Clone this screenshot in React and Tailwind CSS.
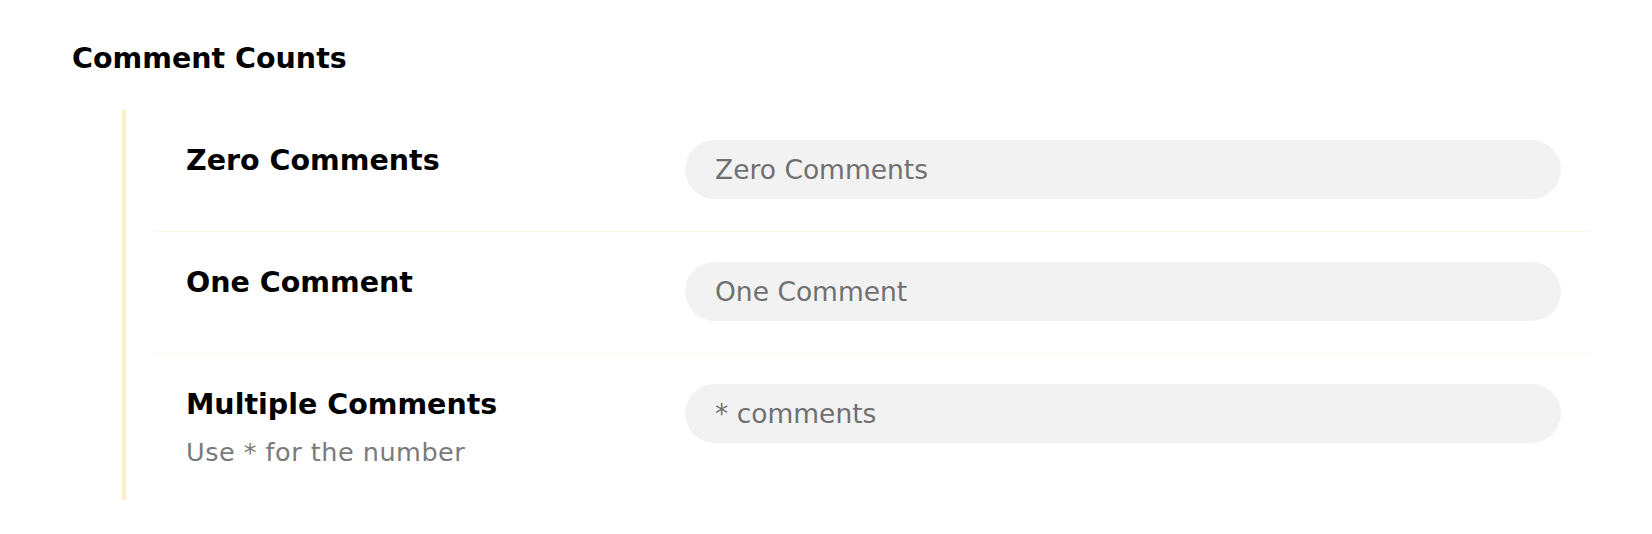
import React from 'react';

const rows = [
    { label: 'Zero Comments', placeholder: 'Zero Comments' },
    { label: 'One Comment', placeholder: 'One Comment' },
    { label: 'Multiple Comments', hint: 'Use * for the number', placeholder: '* comments' },
];

function CountRow({ label, hint, placeholder, last }) {
    return (
        <div className={`flex items-start pl-[31px] pr-[30px] pt-[30px] pb-[32px] ${last ? '' : 'border-b border-[#fdf8e6]'}`}>
            <div className="w-[499px] shrink-0">
                <div className="text-[28.5px] leading-[42px] font-bold text-black">{label}</div>
                {hint && (
                    <div className="text-[25.5px] leading-[32px] tracking-[0.5px] text-[#7a7a7a] mt-[10px]">{hint}</div>
                )}
            </div>
            <input
                className="flex-1 h-[59px] rounded-full bg-[#f2f2f2] px-[30px] text-[26.5px] text-[#6f6f6f] placeholder:text-[#707070] outline-none"
                placeholder={placeholder}
            />
        </div>
    );
}

export default function App() {
    return (
        <div className="min-h-screen bg-white pl-[72px] pr-[61px] pt-[42px] font-['DejaVu_Sans',sans-serif]">
            <h2 className="text-[28.5px] leading-[34px] font-bold text-black">Comment Counts</h2>
            <div className="mt-[34px] ml-[50px] border-l-4 border-[#fef0c8]">
                <div className="ml-[29px]">
                    {rows.map((row, i) => (
                        <CountRow key={row.label} {...row} last={i === rows.length - 1} />
                    ))}
                </div>
            </div>
        </div>
    );
}
